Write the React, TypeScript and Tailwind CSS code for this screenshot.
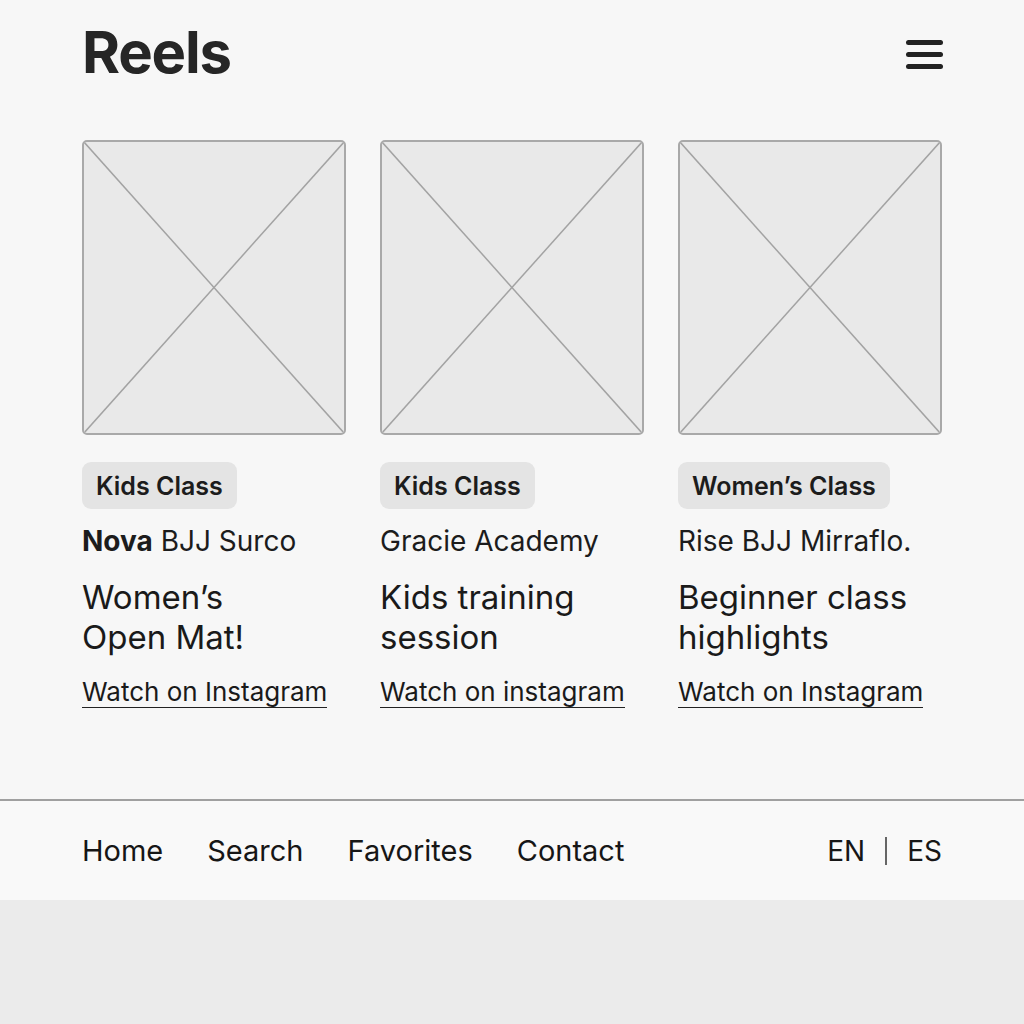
import React from 'react';

interface Reel {
  tag: string;
  academyBold?: string;
  academy: string;
  title: [string, string];
  link: string;
}

const reels: Reel[] = [
  { tag: 'Kids Class', academyBold: 'Nova', academy: ' BJJ Surco', title: ['Women’s', 'Open Mat!'], link: 'Watch on Instagram' },
  { tag: 'Kids Class', academy: 'Gracie Academy', title: ['Kids training', 'session'], link: 'Watch on instagram' },
  { tag: 'Women’s Class', academy: 'Rise BJJ Mirraflo.', title: ['Beginner class', 'highlights'], link: 'Watch on Instagram' },
];

function Placeholder() {
  return (
    <div className="relative h-[295px] w-full rounded-[5px] border-2 border-[#a9a9a9] bg-[#e9e9e9] overflow-hidden">
      <svg className="absolute inset-0 h-full w-full" viewBox="0 0 100 100" preserveAspectRatio="none">
        <line x1="0" y1="0" x2="100" y2="100" stroke="#a3a3a3" strokeWidth="1.5" vectorEffect="non-scaling-stroke" />
        <line x1="100" y1="0" x2="0" y2="100" stroke="#a3a3a3" strokeWidth="1.5" vectorEffect="non-scaling-stroke" />
      </svg>
    </div>
  );
}

function ReelCard({ reel }: { reel: Reel }) {
  return (
    <div className="flex flex-col items-start">
      <Placeholder />
      {/* Тег */}
      <span className="mt-[27px] flex h-[47px] items-center rounded-[9px] bg-[#e4e4e4] px-[14px] pt-[3px] text-[25px] font-semibold text-[#1c1c1c]">
        {reel.tag}
      </span>
      <div className="mt-[15px] text-[28px] leading-[34px] text-[#1c1c1c]">
        {reel.academyBold && <span className="font-bold">{reel.academyBold}</span>}
        {reel.academy}
      </div>
      <div className="mt-[19px] text-[33px] leading-[40px] text-[#1a1a1a]">
        <div>{reel.title[0]}</div>
        <div>{reel.title[1]}</div>
      </div>
      <a className="mt-[20px] inline-block border-b-[1.5px] border-[#222] text-[26px] leading-[30px] text-[#1a1a1a]">
        {reel.link}
      </a>
    </div>
  );
}

export default function App() {
  return (
    <div className="min-h-screen bg-[#ebebeb] font-['Inter',sans-serif]">
      <div className="bg-[#f7f7f7]">
        {/* Заголовок */}
        <header className="flex h-[104px] items-center justify-between px-[82px]">
          <h1 className="text-[58px] font-bold leading-none tracking-[-0.02em] text-[#262626]">Reels</h1>
          <div className="mr-[-1px] flex w-[37px] flex-col gap-[7px] pt-[4px]">
            <span className="h-[5px] rounded-full bg-[#222]" />
            <span className="h-[5px] rounded-full bg-[#222]" />
            <span className="h-[5px] rounded-full bg-[#222]" />
          </div>
        </header>

        <main className="grid grid-cols-3 gap-[34px] px-[82px] pt-[36px] pb-[91px]">
          {reels.map((reel, i) => (
            <ReelCard key={i} reel={reel} />
          ))}
        </main>

        {/* Нижнее меню */}
        <footer className="flex h-[101px] items-center justify-between border-t-2 border-[#a0a0a0] bg-[#f9f9f9] px-[82px] text-[#161616]">
          <nav className="flex items-center gap-[44px] text-[29px]">
            <span>Home</span>
            <span>Search</span>
            <span>Favorites</span>
            <span>Contact</span>
          </nav>
          <div className="flex items-center gap-[20px] text-[28px]">
            <span>EN</span>
            <span className="h-[28px] w-[2px] bg-[#666]" />
            <span>ES</span>
          </div>
        </footer>
      </div>
    </div>
  );
}
